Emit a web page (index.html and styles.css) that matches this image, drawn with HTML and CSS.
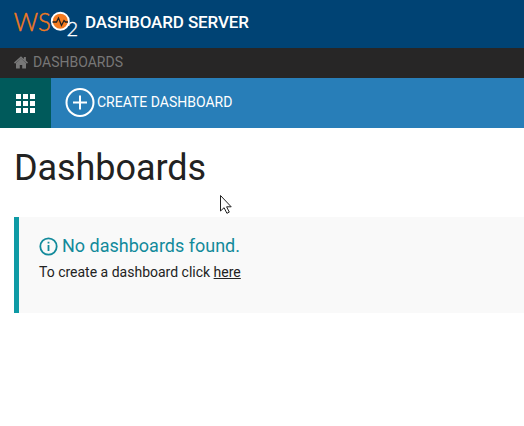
FILE: index.html
```html
<!DOCTYPE html>
<html lang="en">
<head>
<meta charset="utf-8">
<title>Dashboard Server</title>
<link rel="stylesheet" href="styles.css">
</head>
<body>
<header class="header">
  <svg class="logo" width="66" height="30" viewBox="0 0 66 30" aria-label="WSO2">
    <text class="logo-ws" x="-0.3" y="22.5" textLength="37" lengthAdjust="spacingAndGlyphs">WS</text>
    <circle cx="46.3" cy="13.2" r="8.5" fill="#f47b20" stroke="#fff" stroke-width="1.9"/>
    <path d="M38.5 14h4l2-4 3 7.5 2.5-5 1.5 1.5h2.5" fill="none" stroke="#222" stroke-width="1.3"/>
    <text class="logo-two" x="52.4" y="28">2</text>
  </svg>
  <span class="product">DASHBOARD SERVER</span>
</header>
<nav class="breadcrumb">
  <svg class="home" width="14" height="13" viewBox="0 0 14 13"><path d="M7 .2 0 6.5l1 1.2 6-5.2 6 5.2 1-1.2-2.1-1.9V1h-2v1.9z"/><path d="M7 2.6 2 7v5.5h3.8V9h2.4v3.5H12V7z"/></svg>
  <span class="crumb">DASHBOARDS</span>
</nav>
<div class="toolbar">
  <div class="apps">
    <svg width="19" height="19" viewBox="0 0 19 19" fill="#fff"><path d="M0 0h5v5H0zM7 0h5v5H7zM14 0h5v5h-5zM0 7h5v5H0zM7 7h5v5H7zM14 7h5v5h-5zM0 14h5v5H0zM7 14h5v5H7zM14 14h5v5h-5z"/></svg>
  </div>
  <div class="create">
    <svg width="30" height="30" viewBox="0 0 30 30" fill="none" stroke="#fff" stroke-width="2"><circle cx="15" cy="14.5" r="13.5"/><path d="M15 7.5v14M8 14.5h14"/></svg>
    <span class="create-label">CREATE DASHBOARD</span>
  </div>
</div>
<main class="content">
  <h1 class="title">Dashboards</h1>
  <section class="callout">
    <h2 class="callout-title">
      <svg width="19" height="19" viewBox="0 0 19 19"><circle cx="9.5" cy="9.5" r="8.2" fill="none" stroke="#128a9b" stroke-width="1.8"/><path d="M8.6 4.8h1.8v1.8H8.6zM8.6 8h1.8v6H8.6z" fill="#128a9b"/></svg>
      <span class="callout-heading">No dashboards found.</span>
    </h2>
    <p class="callout-text">To create a dashboard click <a class="link" href="#">here</a></p>
  </section>
</main>
<svg class="pointer" width="14" height="21" viewBox="0 0 14 21"><path d="M1.5 1.5V17l3.6-3.3 2.8 5.6 2.4-1.2-2.7-5.3h4.6z" fill="#fff" stroke="#222" stroke-width="1"/></svg>
</body>
</html>
```
FILE: styles.css
```css
body {
  margin: 0;
  height: 426px;
  overflow: hidden;
  background: #fff;
  color: #222;
  font-family: Roboto, sans-serif;
}
.header {
  display: flex;
  height: 48px;
  padding-left: 14px;
  background: #004374;
}
.logo {
  margin-top: 8px;
  overflow: visible;
}
.logo-ws {
  font: 300 26px Lato, sans-serif;
  fill: #f47b20;
  stroke: #f47b20;
  stroke-width: 0.45px;
}
.logo-two {
  font: 300 20px Lato, sans-serif;
  fill: #fff;
  stroke: #fff;
  stroke-width: 0.35px;
}
.product {
  margin-left: 5px;
  color: #fff;
  font-size: 17px;
  font-weight: 500;
  letter-spacing: -0.12px;
  line-height: 44px;
}
.breadcrumb {
  display: flex;
  align-items: center;
  height: 30px;
  padding-left: 14px;
  background: #272626;
  color: #777;
  font-size: 14px;
}
.home {
  margin-top: -2px;
  fill: #777;
}
.crumb {
  margin: -2px 0 0 5px;
}
.toolbar {
  display: flex;
  height: 50px;
  background: #287eb8;
}
.apps {
  display: flex;
  align-items: center;
  justify-content: center;
  width: 51px;
  background: #005a5b;
}
.create {
  display: flex;
  align-items: center;
  padding-left: 14px;
  color: #fff;
  font-size: 14px;
}
.create-label {
  margin: -2px 0 0 2px;
}
.content {
  padding: 19px 0 0 14px;
}
.title {
  margin: 0 0 28px;
  font-size: 36px;
  font-weight: 400;
  letter-spacing: -0.08px;
  line-height: 42px;
}
.callout {
  box-sizing: border-box;
  height: 96px;
  padding: 17px 0 0 20px;
  border-left: 5px solid #0e9aa5;
  background: #f9f9f9;
}
.callout-title {
  display: flex;
  align-items: center;
  margin: 0;
  height: 24px;
  color: #128a9b;
  font-size: 18px;
  font-weight: 400;
}
.callout-heading {
  margin: -2px 0 0 4px;
}
.callout-text {
  margin: 4px 0 0;
  font-size: 14px;
  line-height: 20px;
}
.link {
  color: #222;
}
.pointer {
  position: absolute;
  left: 219px;
  top: 194px;
}
```
